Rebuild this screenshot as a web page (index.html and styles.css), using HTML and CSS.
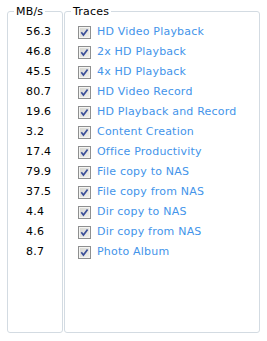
FILE: index.html
```html
<!DOCTYPE html>
<html>
    <head>
        <meta charset="utf-8">
        <title>Traces</title>
        <link rel="stylesheet" href="styles.css">
    </head>
    <body>
        <div class="main">
            <fieldset class="box values">
                <legend>MB/s</legend>
                <ul class="list">
                    <li>56.3</li>
                    <li>46.8</li>
                    <li>45.5</li>
                    <li>80.7</li>
                    <li>19.6</li>
                    <li>3.2</li>
                    <li>17.4</li>
                    <li>79.9</li>
                    <li>37.5</li>
                    <li>4.4</li>
                    <li>4.6</li>
                    <li>8.7</li>
                </ul>
            </fieldset>
            <fieldset class="box traces">
                <legend>Traces</legend>
                <ul class="list" id="traces"></ul>
            </fieldset>
        </div>

        <script>
            const names = ['HD Video Playback', '2x HD Playback', '4x HD Playback', 'HD Video Record',
                'HD Playback and Record', 'Content Creation', 'Office Productivity', 'File copy to NAS',
                'File copy from NAS', 'Dir copy to NAS', 'Dir copy from NAS', 'Photo Album'];
            const tick = '<svg class="check" width="13" height="13" viewBox="0 0 13 13">'
                + '<rect x="0.5" y="0.5" width="12" height="12" fill="url(#g)" stroke="#8e8f8f"/>'
                + '<rect x="1.5" y="1.5" width="10" height="10" fill="none" stroke="#f4f4f2"/>'
                + '<path d="M3.3 6.3 L5.4 9 L9.6 3.4" fill="none" stroke="#3b4f98" stroke-width="1.7"/>'
                + '</svg>';
            document.querySelector('#traces').innerHTML = names
                .map(name => `<li><label>${tick}<span>${name}</span></label></li>`).join('');
        </script>
        <svg width="0" height="0" class="defs">
            <defs>
                <linearGradient id="g" x1="0" y1="0" x2="1" y2="1">
                    <stop offset="0" stop-color="#d4d4d0"/>
                    <stop offset="1" stop-color="#f3f3ef"/>
                </linearGradient>
            </defs>
        </svg>
    </body>
</html>
```

FILE: styles.css
```css
body{
    margin: 0;
    background-color: white;
    font-family: "DejaVu Sans", Verdana, sans-serif;
    font-size: 11px;
    letter-spacing: 0.2px;
}
.main{
    display: flex;
    padding: 5px 0 0 7px;
    gap: 1px;
}
.box{
    box-sizing: border-box;
    height: 328px;
    margin: 0;
    padding: 4px 6px 0 6px;
    border: 1px solid #d3dbe2;
    border-radius: 3px;
}
.values{
    width: 56px;
}
.traces{
    width: 196px;
}
legend{
    padding: 0 2px;
    line-height: 13px;
    color: black;
}
.list{
    list-style: none;
    margin: 0;
    padding: 0;
}
.list li{
    height: 20px;
    line-height: 20px;
}
.values .list{
    padding-left: 12px;
}
.traces .list{
    padding-left: 7px;
}
label{
    display: flex;
    align-items: center;
    gap: 6px;
    color: #4394ea;
}
.check{
    flex: none;
}
.defs{
    position: absolute;
}
```
